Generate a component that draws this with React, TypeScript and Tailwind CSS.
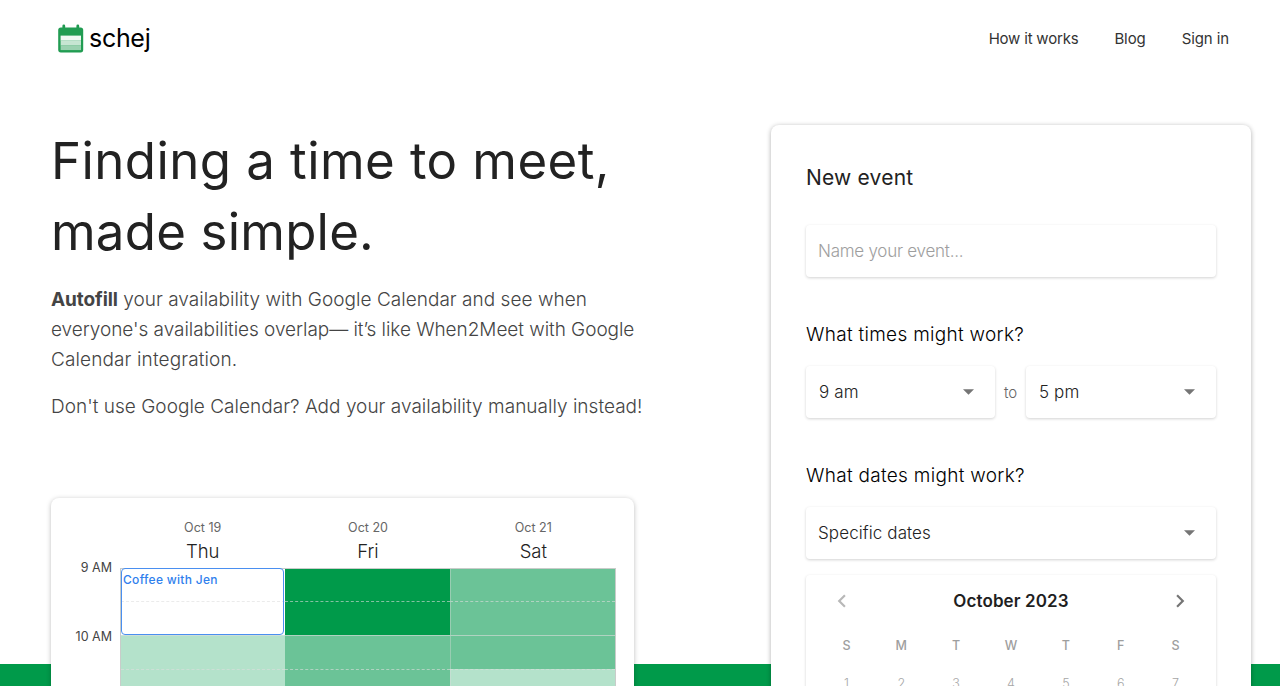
import clsx from 'clsx'

const navItems = [
  { name: 'How it works', href: '#how-it-works', className: 'tracking-[-0.2px]' },
  { name: 'Blog', href: '#blog', className: 'tracking-[-0.1px]' },
  { name: 'Sign in', href: '#sign-in', className: 'tracking-[-0.1px]' },
]

const days = [
  { date: 'Oct 19', day: 'Thu' },
  { date: 'Oct 20', day: 'Fri' },
  { date: 'Oct 21', day: 'Sat' },
]

// One entry per half hour, one colour per day
const slots = [
  ['bg-white', 'bg-[#009a4a]', 'bg-[#6bc397]'],
  ['bg-white', 'bg-[#009a4a]', 'bg-[#6bc397]'],
  ['bg-[#b4e2cb]', 'bg-[#6bc397]', 'bg-[#6bc397]'],
  ['bg-[#b4e2cb]', 'bg-[#6bc397]', 'bg-[#b4e2cb]'],
]

const weekdays = ['S', 'M', 'T', 'W', 'T', 'F', 'S']
const dates = [1, 2, 3, 4, 5, 6, 7]

function Logo() {
  return (
    <a href="#" className="flex items-center">
      <svg width="26" height="29" viewBox="0 0 26 29">
        <rect x="4.4" y="0.5" width="2.8" height="6" rx="1.4" fill="#1f9a50" />
        <rect x="18.4" y="0.5" width="2.8" height="6" rx="1.4" fill="#1f9a50" />
        <rect x="0.2" y="3.4" width="25" height="25" rx="2.6" fill="#219c52" />
        <rect x="2.6" y="11.6" width="20.4" height="5" fill="#f0f8f3" />
        <rect x="2.6" y="16.4" width="20.4" height="5" fill="#c6e5d2" />
        <rect x="2.6" y="21.2" width="20.4" height="4.9" fill="#9ad1b0" />
      </svg>
      <span className="ml-[5px] text-[25px] leading-7 text-black tracking-[-0.3px]">schej</span>
    </a>
  )
}

function Header() {
  return (
    <header className="flex h-[76px] items-center justify-between pl-[58px] pr-[51px]">
      <Logo />
      <nav className="flex items-center gap-[36px] pt-[2px] text-[15px] text-[#333]">
        {navItems.map((item) => (
          <a key={item.name} href={item.href} className={item.className}>
            {item.name}
          </a>
        ))}
      </nav>
    </header>
  )
}

function Schedule() {
  return (
    <div className="mt-[76px] h-[300px] w-[583px] rounded-lg bg-white pl-[69px] pr-[18px] pt-[21px] shadow-[0_1px_5px_rgba(0,0,0,0.26)]">
      <div className="grid grid-cols-3">
        {days.map((d) => (
          <div key={d.day} className="flex flex-col items-center">
            <span className="text-[12.5px] leading-[18px] text-[#666]">{d.date}</span>
            <span className="mt-[3px] text-[18.5px] leading-[22px] font-light text-[#222]">{d.day}</span>
          </div>
        ))}
      </div>
      <div className="relative mt-[6px] border-x border-t border-[#c9ccca]">
        {slots.map((row, i) => (
          <div key={i} className={clsx('grid grid-cols-[164px_165px_1fr]', i === 0 ? 'h-8' : 'h-[34px]')}>
            {row.map((color, j) => (
              <div
                key={j}
                className={clsx(
                  color,
                  i > 0 && 'border-t border-t-[#dddddd]/60',
                  i % 2 === 1 && 'border-dashed',
                  j === 2 && 'shadow-[inset_1px_0_0_rgba(221,221,221,0.4)]'
                )}
              />
            ))}
          </div>
        ))}
        <span className="absolute -left-[59px] -top-[10px] w-[50px] text-right text-[12.5px] leading-[18px] text-[#444]">9 AM</span>
        <span className="absolute -left-[59px] top-[59px] w-[50px] text-right text-[12.5px] leading-[18px] text-[#444]">10 AM</span>
        <div className="absolute left-0 -top-px h-[67px] w-[163px] rounded-[4px] border border-[#4a8ff0] pl-px pt-[2px] text-[12px] leading-[18px] font-medium tracking-[0.3px] text-[#2f80ed]">
          Coffee with Jen
        </div>
      </div>
    </div>
  )
}

function Select({ value, className }: { value: string; className: string }) {
  return (
    <button
      className={clsx(
        'flex h-[52px] items-center justify-between rounded bg-white pr-[21px] text-[17px] font-light tracking-[0.1px] text-[#222] shadow-[0_1px_3px_rgba(0,0,0,0.18)]',
        className
      )}
    >
      <span className="pt-[2px]">{value}</span>
      <svg width="11" height="6" viewBox="0 0 11 6">
        <path d="M0 0.3h11L5.5 5.8z" fill="#757575" />
      </svg>
    </button>
  )
}

function Calendar() {
  return (
    <div className="mt-4 h-[300px] rounded bg-white px-[13px] pt-[14px] shadow-[0_1px_3px_rgba(0,0,0,0.18)]">
      <div className="flex h-6 items-center justify-between px-[10px]">
        <svg width="26" height="26" viewBox="0 0 24 24" fill="#b8b8b8">
          <path d="M15.41 16.58 10.83 12l4.58-4.59L14 6l-6 6 6 6z" />
        </svg>
        <span className="pt-px text-[17px] font-semibold tracking-[0.1px] text-[#1f1f1f]">October 2023</span>
        <svg width="26" height="26" viewBox="0 0 24 24" fill="#757575">
          <path d="M8.59 16.58 13.17 12 8.59 7.41 10 6l6 6-6 6z" />
        </svg>
      </div>
      <div className="mt-[23px] grid grid-cols-7 text-center text-[12.5px] leading-5 font-medium text-[#9e9e9e]">
        {weekdays.map((w, i) => (
          <span key={i}>{w}</span>
        ))}
      </div>
      <div className="mt-[18px] grid grid-cols-7 text-center text-[12.5px] leading-5 font-light text-[#a6a6a6]">
        {dates.map((d) => (
          <span key={d}>{d}</span>
        ))}
      </div>
    </div>
  )
}

function NewEvent() {
  return (
    <section className="mt-[49px] h-[700px] w-[480px] rounded-lg bg-white px-[35px] pt-[39px] shadow-[0_1px_5px_rgba(0,0,0,0.32)]">
      <h2 className="text-[21px] leading-7 tracking-[0.2px] text-[#222]">New event</h2>
      <input
        className="mt-[33px] block h-[52px] w-full rounded bg-white px-[12px] text-[17px] font-light tracking-[-0.25px] text-[#222] shadow-[0_1px_3px_rgba(0,0,0,0.18)] placeholder:text-[#9e9e9e]"
        placeholder="Name your event..."
      />
      <h3 className="mt-[44px] text-[19px] leading-7 font-light tracking-[0.3px] text-[#000]">What times might work?</h3>
      <div className="mt-[17px] flex items-center justify-between">
        <Select value="9 am" className="w-[189px] pl-[13px]" />
        <span className="pt-[2px] text-[15px] font-light text-[#666]">to</span>
        <Select value="5 pm" className="w-[190px] pl-[13px]" />
      </div>
      <h3 className="mt-[44px] text-[19px] leading-7 font-light tracking-[0.3px] text-[#000]">What dates might work?</h3>
      <Select value="Specific dates" className="mt-[17px] w-full pl-3" />
      <Calendar />
    </section>
  )
}

export default function App() {
  return (
    <div className="h-[686px] w-[1280px] overflow-hidden bg-[linear-gradient(to_bottom,#ffffff_664px,#009a4a_664px)] font-['Inter',sans-serif]">
      <Header />
      <main className="flex items-start justify-between pl-[51px] pr-[29px]">
        <section className="w-[620px] pt-[49px]">
          <h1 className="text-[51px] leading-[71px] text-[#222]">
            <span className="tracking-[0.42px]">Finding a time to meet,</span>
            <br />
            <span className="tracking-[0.2px]">made simple.</span>
          </h1>
          <p className="mt-[18px] text-[19px] leading-[30px] font-light text-[#444]">
            <strong className="font-bold tracking-[-0.1px]">Autofill</strong>{' '}
            <span className="tracking-[0.03px]">your availability with Google Calendar and see when</span>
            <br />
            <span className="tracking-[-0.05px]">everyone's availabilities overlap— it’s like When2Meet with Google</span>
            <br />
            <span className="tracking-[0.12px]">Calendar integration.</span>
          </p>
          <p className="mt-[17px] text-[19px] leading-[30px] font-light tracking-[0.02px] whitespace-nowrap text-[#444]">
            Don't use Google Calendar? Add your availability manually instead!
          </p>
          <Schedule />
        </section>
        <NewEvent />
      </main>
    </div>
  )
}
